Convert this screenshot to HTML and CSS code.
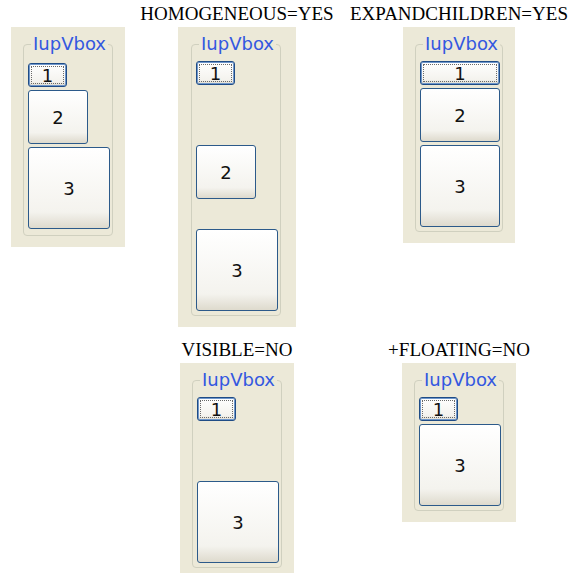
FILE: index.html
```html
<!DOCTYPE html>
<html lang="en">
<head>
    <meta charset="UTF-8">
    <meta name="viewport" content="width=device-width, initial-scale=1.0">
    <title>IupVbox attributes</title>
    <link rel="stylesheet" href="styles.css">
</head>
<body>
    <div class="sheet">
        <!-- default -->
        <div class="cell">
            <div class="caption"></div>
            <div class="panel panel-first">
                <fieldset class="frame">
                    <legend>IupVbox</legend>
                    <div class="vbox">
                        <button class="btn btn-1 btn-default">1</button>
                        <button class="btn btn-2">2</button>
                        <button class="btn btn-3">3</button>
                    </div>
                </fieldset>
            </div>
        </div>

        <div class="cell cell-mid">
            <div class="caption">HOMOGENEOUS=YES</div>
            <div class="panel panel-wide">
                <fieldset class="frame">
                    <legend>IupVbox</legend>
                    <div class="vbox vbox-homo">
                        <button class="btn btn-1 btn-default">1</button>
                        <button class="btn btn-2">2</button>
                        <button class="btn btn-3">3</button>
                    </div>
                </fieldset>
            </div>
        </div>

        <div class="cell cell-right">
            <div class="caption">EXPANDCHILDREN=YES</div>
            <div class="panel">
                <fieldset class="frame">
                    <legend>IupVbox</legend>
                    <div class="vbox vbox-expand">
                        <button class="btn btn-1 btn-default">1</button>
                        <button class="btn btn-2">2</button>
                        <button class="btn btn-3">3</button>
                    </div>
                </fieldset>
            </div>
        </div>

        <div class="cell cell-mid">
            <div class="caption">VISIBLE=NO</div>
            <div class="panel">
                <fieldset class="frame">
                    <legend>IupVbox</legend>
                    <div class="vbox">
                        <button class="btn btn-1 btn-default">1</button>
                        <button class="btn btn-2 btn-hidden">2</button>
                        <button class="btn btn-3">3</button>
                    </div>
                </fieldset>
            </div>
        </div>

        <div class="cell cell-right">
            <div class="caption">+FLOATING=NO</div>
            <div class="panel">
                <fieldset class="frame">
                    <legend>IupVbox</legend>
                    <div class="vbox">
                        <button class="btn btn-1 btn-default">1</button>
                        <button class="btn btn-3">3</button>
                    </div>
                </fieldset>
            </div>
        </div>
    </div>
</body>
</html>
```

FILE: styles.css
```css
body {
    margin: 0;
    background: #fff;
    color: #000;
    font-family: "Liberation Serif", serif;
}
.sheet {
    display: grid;
    grid-template-columns: 136px 202px 233px;
    row-gap: 13px;
    align-items: start;
    padding-top: 4px;
}
.cell {
    display: flex;
    flex-direction: column;
    align-items: center;
}
.cell-mid {
    grid-column: 2;
}
.cell-right {
    grid-column: 3;
    padding-left: 9px;
}
.caption {
    height: 20px;
    margin-bottom: 3px;
    font-size: 19px;
    line-height: 20px;
    white-space: nowrap;
}
.panel {
    background: #ece9d8;
    padding: 6px 12px 11px 12px;
}
.panel-wide {
    padding-left: 13px;
    padding-right: 15px;
}
.frame {
    margin: 0;
    padding: 6px 2px 4px 4px;
    border: 1px solid #d0d0bf;
    border-radius: 4px;
}
.panel-first .frame {
    padding-top: 8px;
    padding-bottom: 6px;
}
.frame legend {
    margin-left: 3px;
    padding: 0 2px;
    font-family: "DejaVu Sans", sans-serif;
    font-size: 18px;
    line-height: 22px;
    color: #3358e0;
}
.vbox {
    display: flex;
    flex-direction: column;
    align-items: flex-start;
    gap: 3px;
}
.vbox-homo {
    display: grid;
    grid-auto-rows: 1fr;
    gap: 2px;
    justify-items: start;
    align-items: start;
}
.vbox-expand {
    align-items: stretch;
}
.btn {
    display: flex;
    align-items: center;
    justify-content: center;
    box-sizing: border-box;
    margin: 0;
    padding: 0;
    border: 1px solid #2c5a8a;
    border-radius: 3px;
    background: linear-gradient(to bottom, #ffffff, #f4f3ee 80%, #dedacd);
    font-family: "DejaVu Sans", sans-serif;
    font-size: 18px;
    color: #111;
}
.btn-1 {
    width: 39px;
    height: 24px;
}
.btn-2 {
    width: 60px;
    height: 54px;
}
.btn-3 {
    width: 82px;
    height: 82px;
}
.vbox-expand .btn {
    width: auto;
}
.btn-default {
    border-color: #1f4c86;
    box-shadow: inset 0 0 0 1px #6f97cb;
    outline: 1px dotted #6a6a6a;
    outline-offset: -4px;
}
.btn-hidden {
    visibility: hidden;
}
```
